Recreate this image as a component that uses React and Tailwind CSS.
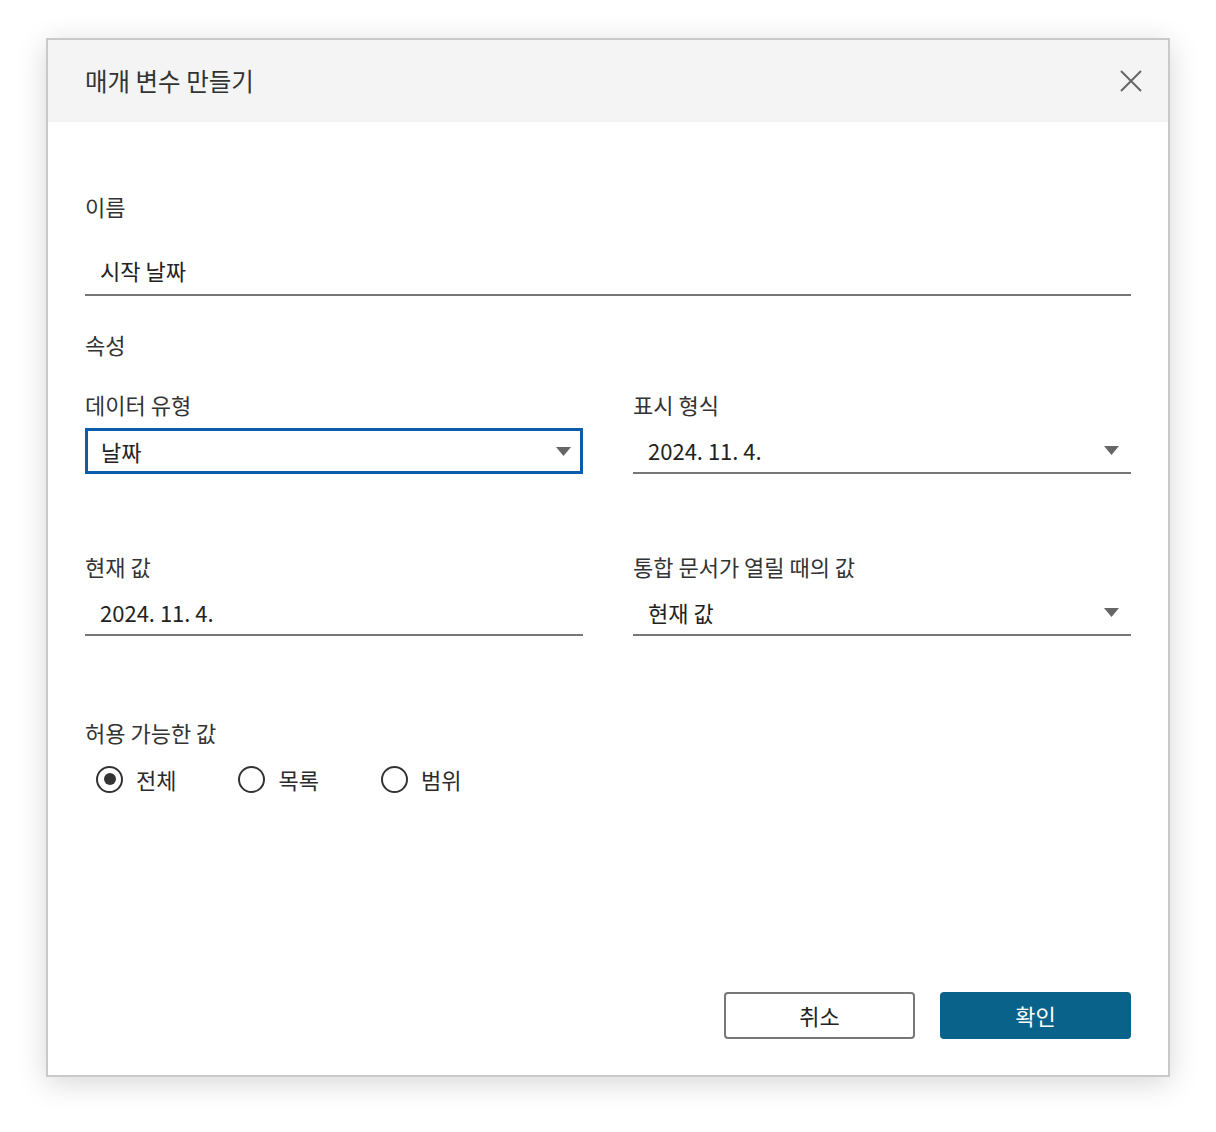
import React from "react";

const font = { fontFamily: '"Noto Sans CJK KR", "Noto Sans", sans-serif' };

function Arrow() {
  return (
    <svg width="15" height="9" viewBox="0 0 15 9" className="shrink-0">
      <path d="M0 0 H15 L7.5 9 Z" fill="#666666" />
    </svg>
  );
}

function Label({ children, className = "" }) {
  return (
    <div className={"h-[30px] flex items-center text-[22px] leading-[30px] text-[#333333] " + className}>
      {children}
    </div>
  );
}

function Radio({ checked, label }) {
  return (
    <div className="flex items-center gap-[13px]">
      <div className="w-[27px] h-[27px] rounded-full border-2 border-[#333333] flex items-center justify-center">
        {checked && <div className="w-[12px] h-[12px] rounded-full bg-[#333333]" />}
      </div>
      <span className="text-[22px] leading-[30px] text-[#2b2b2b]">{label}</span>
    </div>
  );
}

export default function App() {
  return (
    <div className="min-h-[1132px] bg-white pt-[38px] pl-[46px]" style={font}>
      <div className="w-[1124px] h-[1039px] border-2 border-[#c9c9c9] bg-white shadow-[0_6px_28px_rgba(0,0,0,0.16)] flex flex-col">
        <div className="h-[82px] bg-[#f4f4f4] flex items-center justify-between pl-[37px] pr-[26px]">
          <span className="text-[24.5px] leading-[32px] text-[#333333]">매개 변수 만들기</span>
          <svg width="22" height="22" viewBox="0 0 22 22">
            <path d="M1 1 L21 21 M21 1 L1 21" stroke="#666666" strokeWidth="2" />
          </svg>
        </div>
        <div className="flex-1 flex flex-col pl-[37px] pr-[37px] pt-[69px] pb-[36px]">
          <Label>이름</Label>
          <div className="mt-[29px] h-[46px] border-b-2 border-[#777777] flex items-center pl-[15px] pb-[4px] text-[22px] text-[#222222]">
            시작 날짜
          </div>
          <Label className="mt-[33px]">속성</Label>
          <div className="mt-[30px] grid grid-cols-2 gap-x-[50px]">
            <div className="flex flex-col">
              <Label>데이터 유형</Label>
              <div className="mt-[9px] h-[46px] border-[3px] border-[#0b5cab] flex items-center justify-between pl-[13px] pr-[9px] text-[22px] text-[#222222]">
                <span>날짜</span>
                <Arrow />
              </div>
            </div>
            <div className="flex flex-col">
              <Label>표시 형식</Label>
              <div className="mt-[9px] h-[46px] border-b-2 border-[#777777] flex items-center justify-between pl-[15px] pr-[12px] text-[22px] text-[#222222]">
                <span>2024. 11. 4.</span>
                <Arrow />
              </div>
            </div>
            <div className="flex flex-col mt-[77px]">
              <Label>현재 값</Label>
              <div className="mt-[9px] h-[46px] border-b-2 border-[#777777] flex items-center pl-[15px] text-[22px] text-[#222222]">
                <span>2024. 11. 4.</span>
              </div>
            </div>
            <div className="flex flex-col mt-[77px]">
              <Label>통합 문서가 열릴 때의 값</Label>
              <div className="mt-[9px] h-[46px] border-b-2 border-[#777777] flex items-center justify-between pl-[15px] pr-[12px] text-[22px] text-[#222222]">
                <span>현재 값</span>
                <Arrow />
              </div>
            </div>
          </div>
          <Label className="mt-[81px]">허용 가능한 값</Label>
          <div className="mt-[17px] h-[30px] flex items-center gap-[62px] pl-[11px]">
            <Radio checked label="전체" />
            <Radio label="목록" />
            <Radio label="범위" />
          </div>
          <div className="mt-auto flex justify-end gap-[25px]">
            <button className="w-[191px] h-[47px] border-2 border-[#777777] rounded-[4px] bg-white text-[22px] text-[#222222]">
              취소
            </button>
            <button className="w-[191px] h-[47px] rounded-[4px] bg-[#08628a] text-[22px] text-white">
              확인
            </button>
          </div>
        </div>
      </div>
    </div>
  );
}
